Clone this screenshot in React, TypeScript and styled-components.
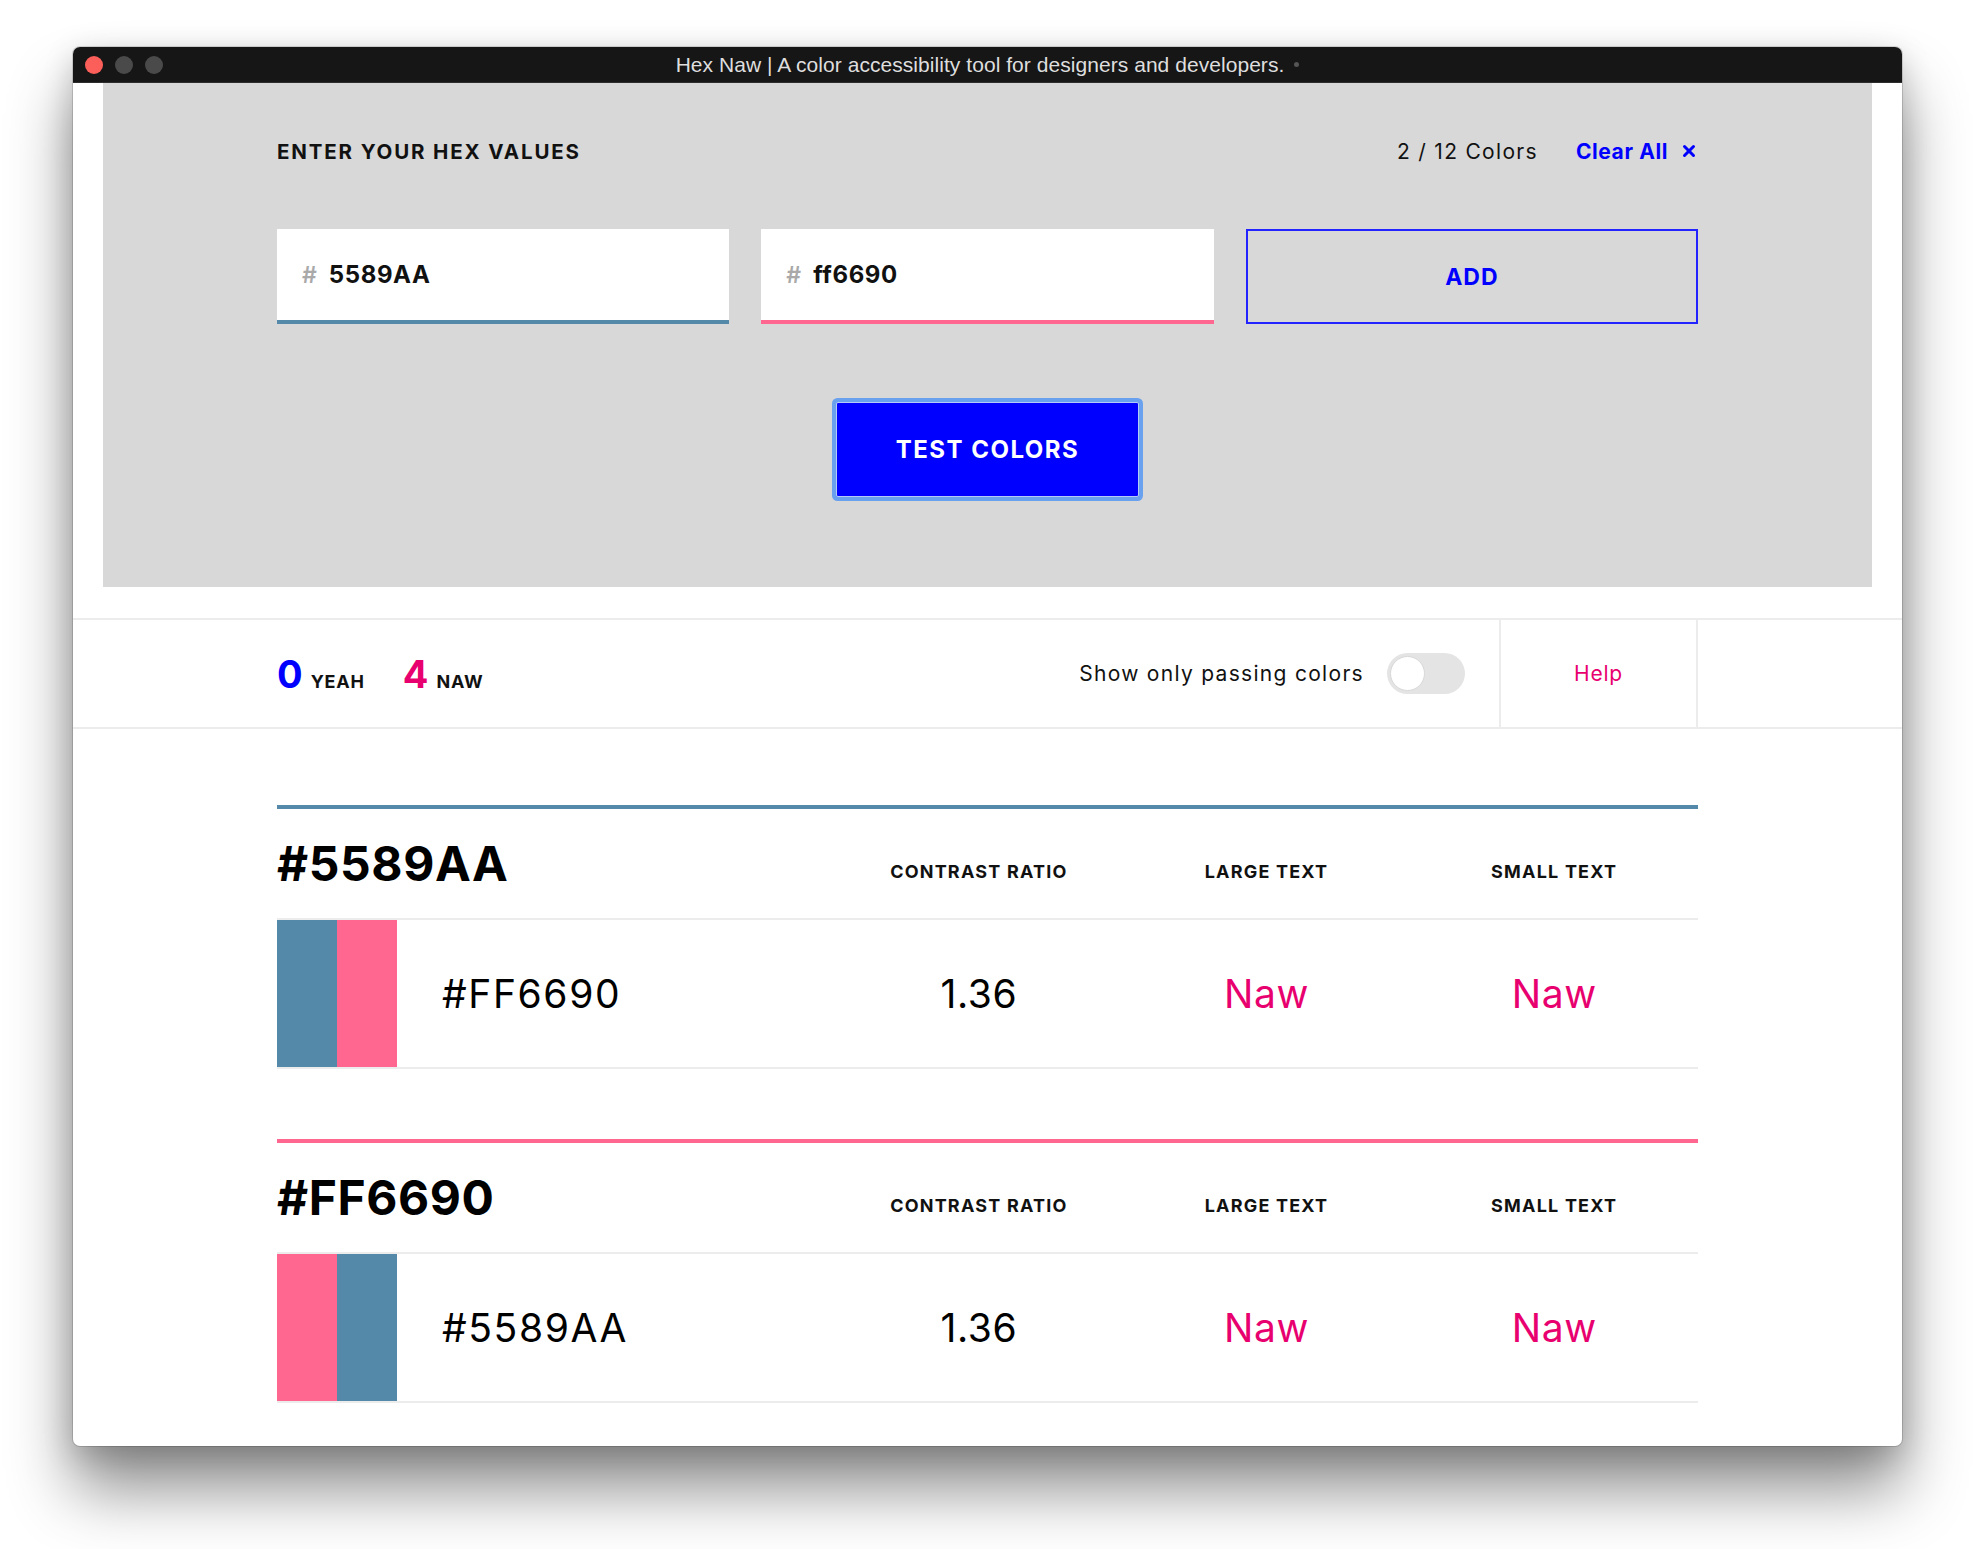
import React from "react";
import styled, { createGlobalStyle } from "styled-components";
import { X } from "lucide-react";

const BLUE = "#0000ff";
const PINK = "#e8006f";
const LINE = "#ececec";
const FONT = `Inter, "Noto Sans", sans-serif`;

const GlobalStyle = createGlobalStyle`
  html, body { margin: 0; padding: 0; background: #ffffff; }
  body { font-family: ${FONT}; color: #111; -webkit-font-smoothing: antialiased; }
  * { box-sizing: border-box; }
`;

const Stage = styled.div`
  height: 1549px;
  padding-top: 47px;
  display: flex;
  justify-content: center;
  align-items: flex-start;
  overflow: hidden;
`;

const Window = styled.div`
  width: 1829px;
  height: 1399px;
  background: #fff;
  border-radius: 7px;
  overflow: hidden;
  display: flex;
  flex-direction: column;
  box-shadow: 0 0 0 1px rgba(0, 0, 0, 0.14), 0 44px 64px rgba(0, 0, 0, 0.44),
    0 8px 30px rgba(0, 0, 0, 0.18);
`;

const TitleBar = styled.header`
  flex: none;
  height: 36px;
  background: #161616;
  display: grid;
  grid-template-columns: 1fr auto 1fr;
  align-items: center;
  padding: 0 12px;
  border-bottom: 1px solid #2e2e2e;
`;

const Lights = styled.div`
  display: flex;
  gap: 12px;
`;

const Light = styled.span<{ $c: string }>`
  width: 18px;
  height: 18px;
  border-radius: 50%;
  background: ${(p) => p.$c};
`;

const WindowTitle = styled.div`
  display: flex;
  align-items: center;
  gap: 10px;
  font-family: "Liberation Sans", Arial, sans-serif;
  font-size: 21px;
  letter-spacing: 0.05px;
  color: #dedede;
  white-space: nowrap;
`;

const TitleDot = styled.span`
  width: 5px;
  height: 5px;
  border-radius: 50%;
  background: #555;
`;

const Panel = styled.section`
  flex: none;
  margin: 0 30px;
  height: 504px;
  background: #d8d8d8;
  padding-top: 53px;
`;

const Inner = styled.div`
  width: 1421px;
  margin: 0 auto;
`;

const PanelHeader = styled.div`
  display: flex;
  align-items: center;
  justify-content: space-between;
  height: 30px;
`;

const SectionLabel = styled.h2`
  margin: 0;
  font-size: 20.5px;
  font-weight: 700;
  letter-spacing: 1.85px;
  color: #111;
`;

const HeaderMeta = styled.div`
  display: flex;
  align-items: center;
  gap: 38px;
`;

const Counter = styled.span`
  font-size: 21px;
  letter-spacing: 1.3px;
  color: #111;
`;

const ClearAll = styled.button`
  display: flex;
  align-items: center;
  gap: 12px;
  border: 0;
  padding: 0;
  background: transparent;
  font-family: ${FONT};
  font-size: 21px;
  font-weight: 700;
  letter-spacing: 0.6px;
  color: ${BLUE};
`;

const InputGrid = styled.div`
  display: grid;
  grid-template-columns: repeat(3, 1fr);
  gap: 32px;
  margin-top: 63px;
  height: 95px;
`;

const Field = styled.label<{ $accent: string }>`
  display: flex;
  align-items: center;
  gap: 12px;
  background: #fff;
  border-bottom: 4px solid ${(p) => p.$accent};
  padding-left: 25px;
`;

const Hash = styled.span`
  font-size: 23px;
  font-weight: 600;
  color: #a9a9a9;
`;

const HexInput = styled.input`
  border: 0;
  outline: 0;
  padding: 0;
  width: 100%;
  background: transparent;
  font-family: ${FONT};
  font-size: 24px;
  font-weight: 700;
  letter-spacing: 0.6px;
  color: #111;
`;

const AddButton = styled.button`
  border: 2px solid #2323ff;
  background: transparent;
  color: ${BLUE};
  font-family: ${FONT};
  font-size: 23px;
  font-weight: 700;
  letter-spacing: 1px;
`;

const ButtonRow = styled.div`
  display: flex;
  justify-content: center;
  margin-top: 78px;
`;

const TestButton = styled.button`
  width: 303px;
  height: 95px;
  background: ${BLUE};
  color: #fff;
  border: 1px solid #b3cbf6;
  border-radius: 2px;
  box-shadow: 0 0 0 4px #6aa1ee;
  font-family: ${FONT};
  font-size: 24px;
  font-weight: 700;
  letter-spacing: 1.5px;
`;

const StatsBar = styled.section`
  flex: none;
  margin-top: 31px;
  height: 111px;
  border-top: 2px solid ${LINE};
  border-bottom: 2px solid ${LINE};
`;

const StatsInner = styled(Inner)`
  height: 100%;
  display: flex;
  align-items: stretch;
`;

const Tally = styled.div`
  flex: 1;
  display: flex;
  align-items: center;
  gap: 38px;
`;

const TallyItem = styled.div`
  display: flex;
  align-items: baseline;
  gap: 8px;
`;

const TallyNum = styled.span<{ $c: string }>`
  font-size: 38px;
  font-weight: 700;
  line-height: 1;
  color: ${(p) => p.$c};
`;

const TallyLabel = styled.span`
  font-size: 18px;
  font-weight: 700;
  letter-spacing: 0.8px;
`;

const FilterToggle = styled.div`
  display: flex;
  align-items: center;
  gap: 23px;
  padding-right: 34px;
`;

const ToggleLabel = styled.span`
  font-size: 21px;
  letter-spacing: 1.3px;
`;

const Track = styled.span`
  width: 78px;
  height: 41px;
  border-radius: 21px;
  background: #e4e4e4;
  display: flex;
  align-items: center;
  padding: 0 3px;
`;

const Knob = styled.span`
  width: 35px;
  height: 35px;
  border-radius: 50%;
  background: #fff;
  border: 1px solid #d8d8d8;
`;

const HelpCell = styled.a`
  width: 199px;
  display: flex;
  align-items: center;
  justify-content: center;
  border-left: 2px solid ${LINE};
  border-right: 2px solid ${LINE};
  color: ${PINK};
  font-size: 21px;
  letter-spacing: 0.8px;
  text-decoration: none;
`;

const Results = styled.main`
  width: 1421px;
  margin: 76px auto 0;
  display: flex;
  flex-direction: column;
  gap: 70px;
`;

const Block = styled.article<{ $accent: string }>`
  border-top: 4px solid ${(p) => p.$accent};
`;

const BlockHead = styled.div`
  display: grid;
  grid-template-columns: 558px repeat(3, 1fr);
  align-items: center;
  height: 111px;
  border-bottom: 2px solid ${LINE};
`;

const BlockTitle = styled.h3`
  margin: 0;
  font-size: 48px;
  font-weight: 700;
  line-height: 1;
  letter-spacing: 0.6px;
  color: #000;
`;

const ColHead = styled.div`
  text-align: center;
  font-size: 18px;
  font-weight: 700;
  line-height: 1;
  letter-spacing: 1.2px;
  padding-top: 17px;
  color: #111;
`;

const PairRow = styled.div`
  display: grid;
  grid-template-columns: 558px repeat(3, 1fr);
  align-items: center;
  height: 149px;
  border-bottom: 2px solid ${LINE};
`;

const PairLead = styled.div`
  display: flex;
  align-items: center;
  gap: 45px;
  height: 100%;
`;

const Swatches = styled.div`
  display: flex;
  height: 100%;
`;

const Swatch = styled.span<{ $c: string }>`
  width: 60px;
  background: ${(p) => p.$c};
`;

const PairHex = styled.span`
  font-size: 39px;
  letter-spacing: 1.6px;
  color: #000;
`;

const Cell = styled.div<{ $c?: string }>`
  text-align: center;
  font-size: 39px;
  letter-spacing: 0.6px;
  color: ${(p) => p.$c ?? "#000"};
`;

const colors = [
  { hex: "5589AA", input: "5589AA", swatch: "#5589aa" },
  { hex: "FF6690", input: "ff6690", swatch: "#ff6690" },
];

export default function App() {
  return (
    <>
      <GlobalStyle />
      <Stage>
        <Window>
          <TitleBar>
            <Lights>
              <Light $c="#fc5f5a" />
              <Light $c="#4a4a4a" />
              <Light $c="#4a4a4a" />
            </Lights>
            <WindowTitle>
              Hex Naw | A color accessibility tool for designers and developers.
              <TitleDot />
            </WindowTitle>
            <span />
          </TitleBar>

          <Panel>
            <Inner>
              <PanelHeader>
                <SectionLabel>ENTER YOUR HEX VALUES</SectionLabel>
                <HeaderMeta>
                  <Counter>2 / 12 Colors</Counter>
                  <ClearAll>
                    Clear All <X size={18} strokeWidth={4} />
                  </ClearAll>
                </HeaderMeta>
              </PanelHeader>
              <InputGrid>
                {colors.map((c) => (
                  <Field key={c.hex} $accent={c.swatch}>
                    <Hash>#</Hash>
                    <HexInput defaultValue={c.input} readOnly />
                  </Field>
                ))}
                <AddButton>ADD</AddButton>
              </InputGrid>
              <ButtonRow>
                <TestButton>TEST COLORS</TestButton>
              </ButtonRow>
            </Inner>
          </Panel>

          <StatsBar>
            <StatsInner>
              <Tally>
                <TallyItem>
                  <TallyNum $c={BLUE}>0</TallyNum>
                  <TallyLabel>YEAH</TallyLabel>
                </TallyItem>
                <TallyItem>
                  <TallyNum $c={PINK}>4</TallyNum>
                  <TallyLabel>NAW</TallyLabel>
                </TallyItem>
              </Tally>
              <FilterToggle>
                <ToggleLabel>Show only passing colors</ToggleLabel>
                <Track>
                  <Knob />
                </Track>
              </FilterToggle>
              <HelpCell href="#">Help</HelpCell>
            </StatsInner>
          </StatsBar>

          <Results>
            {colors.map((c, i) => {
              const other = colors[1 - i];
              return (
                <Block key={c.hex} $accent={c.swatch}>
                  <BlockHead>
                    <BlockTitle>#{c.hex}</BlockTitle>
                    <ColHead>CONTRAST RATIO</ColHead>
                    <ColHead>LARGE TEXT</ColHead>
                    <ColHead>SMALL TEXT</ColHead>
                  </BlockHead>
                  <PairRow>
                    <PairLead>
                      <Swatches>
                        <Swatch $c={c.swatch} />
                        <Swatch $c={other.swatch} />
                      </Swatches>
                      <PairHex>#{other.hex}</PairHex>
                    </PairLead>
                    <Cell>1.36</Cell>
                    <Cell $c={PINK}>Naw</Cell>
                    <Cell $c={PINK}>Naw</Cell>
                  </PairRow>
                </Block>
              );
            })}
          </Results>
        </Window>
      </Stage>
    </>
  );
}
